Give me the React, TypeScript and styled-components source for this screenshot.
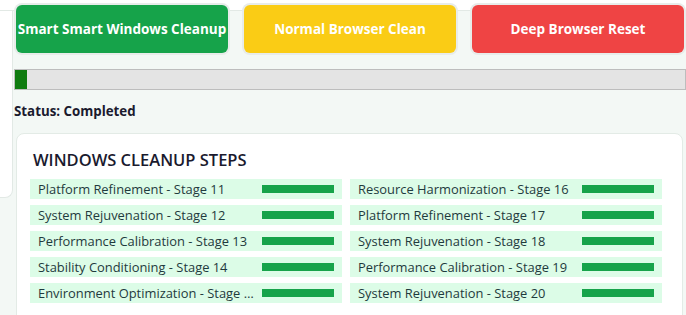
import React from 'react'
import styled, { createGlobalStyle } from 'styled-components'

const GlobalStyle = createGlobalStyle`
  html, body {
    margin: 0;
    padding: 0;
    background: #f3f8f5;
    font-family: 'Open Sans', 'Noto Sans', sans-serif;
  }
  * {
    box-sizing: border-box;
  }
`

const Frame = styled.div`
  display: grid;
  grid-template-columns: 13px 1fr;
  height: 315px;
  overflow: hidden;
`

const TopBar = styled.div`
  grid-column: 1 / -1;
  height: 11px;
  background: #ffffff;
  border-bottom: 1px solid #e2e9e5;
`

const Sidebar = styled.aside`
  grid-column: 1;
  grid-row: 2;
  height: 187px;
  background: #ffffff;
  border-right: 1px solid #e2e9e5;
  border-bottom: 1px solid #e2e9e5;
  border-bottom-right-radius: 8px;
`

const Main = styled.main`
  grid-column: 2;
  grid-row: 2;
  margin-top: -6px;
  padding-left: 1px;
  display: flex;
  flex-direction: column;
  min-width: 0;
`

const ButtonRow = styled.div`
  display: grid;
  grid-template-columns: repeat(3, 1fr);
  gap: 16px;
  padding: 0 2px;
`

const ActionButton = styled.button<{ $bg: string }>`
  height: 48px;
  border: none;
  border-radius: 6px;
  background: ${({ $bg }) => $bg};
  box-shadow: 0 0 0 2px #e8ecea;
  color: #ffffff;
  font-family: 'Open Sans', 'Noto Sans', sans-serif;
  font-weight: 700;
  font-size: 13.5px;
  padding: 0;
  white-space: nowrap;
  cursor: pointer;
`

const ProgressTrack = styled.div`
  margin-top: 16px;
  height: 21px;
  background: #e4e4e4;
  border: 1px solid #bdbdbd;
  display: flex;
`

const ProgressFill = styled.div`
  height: 100%;
  background: #107c10;
`

const Status = styled.div`
  margin-top: 13px;
  font-size: 13.3px;
  line-height: 16px;
  font-weight: 700;
  color: #1a1a2e;
`

const Card = styled.section`
  margin: 14px 3px 0 2px;
  background: #ffffff;
  border: 1px solid #e3ebe6;
  border-radius: 8px;
  padding: 16px 20px 20px 13px;
`

const CardTitle = styled.h2`
  margin: 0 0 9px 3px;
  font-size: 16.5px;
  line-height: 20px;
  font-weight: 600;
  color: #1a1a2e;
  text-transform: uppercase;
`

const StepGrid = styled.div`
  display: grid;
  grid-template-columns: 1fr 1fr;
  column-gap: 8px;
  row-gap: 6px;
`

const StepItem = styled.div`
  height: 20px;
  display: flex;
  align-items: center;
  gap: 4px;
  padding: 0 8px;
  background: #dcfce7;
  min-width: 0;
`

const StepLabel = styled.span`
  flex: 1;
  min-width: 0;
  font-size: 12.9px;
  color: #1f3a3d;
  white-space: nowrap;
  overflow: hidden;
  text-overflow: ellipsis;
`

const StepBar = styled.div`
  flex: 0 0 72px;
  height: 8px;
  background: #16a34a;
`

const actions = [
  { label: 'Smart Smart Windows Cleanup', color: '#16a34a' },
  { label: 'Normal Browser Clean', color: '#facc15' },
  { label: 'Deep Browser Reset', color: '#ef4444' },
]

// column-major order, like the original list
const steps = [
  'Platform Refinement - Stage 11',
  'Resource Harmonization - Stage 16',
  'System Rejuvenation - Stage 12',
  'Platform Refinement - Stage 17',
  'Performance Calibration - Stage 13',
  'System Rejuvenation - Stage 18',
  'Stability Conditioning - Stage 14',
  'Performance Calibration - Stage 19',
  'Environment Optimization - Stage 15',
  'System Rejuvenation - Stage 20',
]

export default function App() {
  const progress = 12

  return (
    <>
      <GlobalStyle />
      <Frame>
        <TopBar />
        <Sidebar />
        <Main>
          <ButtonRow>
            {actions.map(a => (
              <ActionButton key={a.label} $bg={a.color}>
                {a.label}
              </ActionButton>
            ))}
          </ButtonRow>
          <ProgressTrack>
            <ProgressFill style={{ width: progress + 'px' }} />
          </ProgressTrack>
          <Status>Status: Completed</Status>
          <Card>
            <CardTitle>Windows Cleanup Steps</CardTitle>
            <StepGrid>
              {steps.map((s, i) => (
                <StepItem key={i}>
                  <StepLabel>{s}</StepLabel>
                  <StepBar />
                </StepItem>
              ))}
            </StepGrid>
          </Card>
        </Main>
      </Frame>
    </>
  )
}
